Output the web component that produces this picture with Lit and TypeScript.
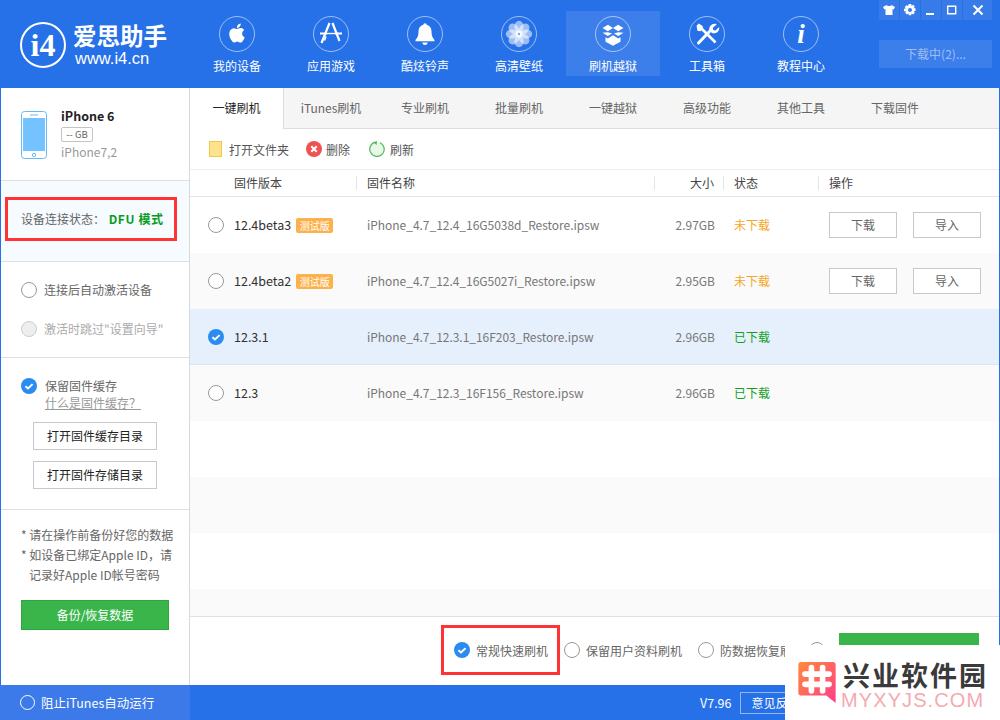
import { LitElement, html, css, svg } from "lit";
import { customElement } from "lit/decorators.js";

const ring = svg`<circle cx="18" cy="18" r="17.5" fill="none" stroke="#fff" stroke-opacity=".55" stroke-width="1"/>`;
const petals = [0, 45, 90, 135, 180, 225, 270, 315];
const navIcons = [
  svg`<g transform="translate(6.6 5.6) scale(.95)"><path fill="#fff" d="M18.71,19.5C17.88,20.74 17,21.95 15.66,21.97C14.32,22 13.89,21.18 12.37,21.18C10.84,21.18 10.37,21.95 9.1,22C7.79,22.05 6.8,20.68 5.96,19.47C4.25,17 2.94,12.45 4.7,9.39C5.57,7.87 7.13,6.91 8.82,6.88C10.1,6.86 11.32,7.75 12.11,7.75C12.89,7.75 14.37,6.68 15.92,6.84C16.57,6.87 18.39,7.1 19.56,8.82C19.47,8.88 17.39,10.1 17.41,12.63C17.44,15.65 20.06,16.66 20.09,16.67C20.06,16.74 19.67,18.11 18.71,19.5M13,3.5C13.73,2.67 14.94,2.04 15.94,2C16.07,3.17 15.6,4.35 14.9,5.19C14.21,6.04 13.07,6.7 11.95,6.61C11.8,5.46 12.36,4.26 13,3.5Z"/></g>`,
  svg`<g stroke="#fff" fill="none"><path stroke-width="2" d="M7 17.5h7M22 17.5h7"/><path stroke-width="1.4" d="M13.5 17.5h9"/><path stroke-width="2.2" d="M19.5 7l7 18M16.5 7 L8.5 27"/><path stroke-width="1.6" d="M13 20.5l-1.5 4"/></g>`,
  svg`<path fill="#fff" d="M18 7.2a1.7 1.7 0 0 1 1.7 1.6c3.2.8 4.8 3.3 4.8 6.7 0 4.2 1 6.2 3 8.5v1.2h-19v-1.2c2-2.3 3-4.3 3-8.5 0-3.4 1.6-5.9 4.8-6.7A1.7 1.7 0 0 1 18 7.2zM15.4 26.5h5.2a2.6 2.4 0 0 1-5.2 0z"/>`,
  svg`<g fill="#fff">${petals.map(
    (a) => svg`<ellipse cx="18" cy="10.8" rx="4.6" ry="6" opacity=".55" transform="rotate(${a} 18 18)"/>`
  )}<circle cx="18" cy="18" r="3.4" opacity=".9"/><circle cx="18" cy="18" r="1.2" fill="#7fa8ee"/></g>`,
  svg`<g fill="#fff"><path d="M13 8.800l5 3.200-5.200 3.200-5.300-3.300zM23 8.800L18 12l5.200 3.200 5.300-3.300z"/><path d="M7.500 16.800l5.300 3.300 4.200-2.600-4.200-1.300zM28.500 16.800l-5.300 3.300-4.200-2.600 4.200-1.300z"/><path d="M10.500 21.200l2.300 1.300 5.200-3.200 5.200 3.200 2.300-1.300v4.600L18 29.800l-7.500-4z"/></g>`,
  svg`<g fill="#fff" stroke="#fff"><path stroke-width="3" stroke-linecap="round" d="M9.5 27l11-11.5"/><path stroke="none" d="M27.8 8.200l-3.900 3.600.3 2.300 2.200.4 3.700-3.600c.7 3-1.500 7-6.600 6.400l-3.200-2.600c-.9-4.600 3.400-8.200 7.500-6.500z"/><path stroke-width="2.6" stroke-linecap="butt" d="M11 11l15.500 15.500"/><path stroke="none" d="M7.600 9.800l2.200-2.200 3.800 2.500.4 3-2.600 2.200-3-.5z"/></g>`,
  svg`<text x="18" y="27" text-anchor="middle" font-family="Liberation Serif, serif" font-weight="700" font-style="italic" font-size="27" fill="#fff">i</text>`,
];
const nav = ["我的设备", "应用游戏", "酷炫铃声", "高清壁纸", "刷机越狱", "工具箱", "教程中心"];
const tabs = ["一键刷机", "iTunes刷机", "专业刷机", "批量刷机", "一键越狱", "高级功能", "其他工具", "下载固件"];
type Row = { v: string; beta?: boolean; f: string; s: string; done: boolean; sel?: boolean };
const rows: Row[] = [
  { v: "12.4beta3", beta: true, f: "iPhone_4.7_12.4_16G5038d_Restore.ipsw", s: "2.97GB", done: false },
  { v: "12.4beta2", beta: true, f: "iPhone_4.7_12.4_16G5027i_Restore.ipsw", s: "2.95GB", done: false },
  { v: "12.3.1", f: "iPhone_4.7_12.3.1_16F203_Restore.ipsw", s: "2.96GB", done: true, sel: true },
  { v: "12.3", f: "iPhone_4.7_12.3_16F156_Restore.ipsw", s: "2.96GB", done: true },
];
const check = html`<svg class="ic16" viewBox="0 0 16 16"><circle cx="8" cy="8" r="8" fill="#2a8cf0"/><path d="M4.400 8.200l2.600 2.300 4.600-4.400" fill="none" stroke="#fff" stroke-width="2"/></svg>`;

@customElement("app-root")
export class AppRoot extends LitElement {
  static styles = css`
    :host { display: flex; flex-direction: column; width: 1000px; height: 720px; position: relative; overflow: hidden; background: #fff;
      font-family: "Noto Sans CJK SC", "Microsoft YaHei", sans-serif; font-size: 12px; color: #333; }
    .head { height: 88px; flex: none; background: #2670e8; display: flex; color: #fff; }
    .brand { width: 190px; flex: none; display: flex; align-items: center; padding: 1px 0 0 20px; box-sizing: border-box; gap: 8px; }
    .brand svg { width: 46px; height: 46px; display: block; }
    .brand b { display: block; font-size: 23.5px; line-height: 27px; font-weight: 700; margin-left: -1px; }
    .brand span { display: block; font-family: "Liberation Sans", sans-serif; font-size: 16.5px; line-height: 18px; margin: 0 0 0 1px; white-space: nowrap; }
    .nav { display: flex; width: 658px; padding-top: 11px; box-sizing: border-box; }
    .nav-item { width: 94px; height: 65px; display: flex; flex-direction: column; align-items: center; padding-top: 5px; box-sizing: border-box; }
    .nav-item.on { background: rgba(255,255,255,.1); }
    .nav-item svg { width: 36px; height: 36px; display: block; }
    .nav-item span { line-height: 16px; margin-top: 6px; }
    .tools { margin-left: 31px; width: 113px; }
    .win { display: flex; gap: 1px; height: 20px; }
    .win div { width: 20px; background: rgba(255,255,255,.08); display: flex; align-items: center; justify-content: center; }
    .win div:last-child { width: 29px; }
    .win svg { width: 12px; height: 12px; display: block; }
    .dl { margin-top: 20px; height: 28px; background: rgba(255,255,255,.1); color: rgba(255,255,255,.5); line-height: 28px; text-align: center; }
    .body { flex: 1; display: flex; min-height: 0; border-left: 1px solid #2670e8; border-right: 1px solid #2670e8; }
    .side { width: 189px; box-sizing: border-box; flex: none; border-right: 1px solid #d9d9d9; display: flex; flex-direction: column; }
    .sec { border-bottom: 1px solid #dfdfdf; box-sizing: border-box; flex: none; }
    .dev { height: 93px; display: flex; padding: 23px 0 0 20px; gap: 14px; }
    .phone { width: 26px; height: 48px; display: block; }
    .dev b { display: block; font-size: 12.5px; line-height: 14px; margin-top: -2px; color: #222; }
    .tag { display: block; width: 32px; height: 15px; box-sizing: border-box; border: 1px solid #c4c4c4; border-radius: 2px; font-size: 9.5px; line-height: 13px; text-align: center; margin-top: 4px; color: #666; }
    .model { display: block; color: #999; line-height: 16px; margin-top: 2px; }
    .stat { height: 81px; background: #f5fbff; padding: 16px 0 0 4px; }
    .redbox { border: 3px solid #f33; box-sizing: border-box; }
    .stat .redbox { width: 172px; height: 44px; padding-left: 13px; line-height: 38px; display: flex; align-items: center; color: #666; white-space: nowrap; }
    .stat b { color: #0a9a1f; margin-left: 1px; font-weight: 700; letter-spacing: .6px; }
    .act { height: 96px; padding: 19px 0 0 20px; display: flex; flex-direction: column; gap: 21px; }
    .opt { display: flex; align-items: center; gap: 7px; height: 18px; color: #666; white-space: nowrap; }
    .opt span { padding-bottom: 2px; }
    .opt.off { color: #aaa; }
    .radio { width: 16px; height: 16px; flex: none; border: 1.5px solid #999; border-radius: 50%; box-sizing: border-box; background: #fff; }
    .radio.dis { background: #eee; border-color: #ccc; }
    .ic16 { width: 16px; height: 16px; flex: none; display: block; }
    .cache { height: 152px; padding: 19px 0 0 20px; }
    .cache .opt { gap: 8px; }
    .link { display: block; color: #999; text-decoration: underline; margin: 0 0 0 24px; line-height: 16px; }
    .sbtn { width: 124px; height: 28px; border: 1px solid #c8c8c8; box-sizing: border-box; margin: 11px 0 0 12px; text-align: center; line-height: 26px; color: #222; background: #fff; }
    .notes { padding: 15px 0 0 20px; color: #666; line-height: 20px; }
    .notes p { margin: 0; white-space: nowrap; }
    .notes p.ind { padding-left: 8px; }
    .green { display: block; width: 148px; height: 30px; margin-top: 15px; background: #3ab54a; border: 1px solid #2ea63e; box-sizing: border-box; color: #fff; text-align: center; line-height: 28px; }
    .main { flex: 1; min-width: 0; display: flex; flex-direction: column; }
    .tabs { height: 41px; flex: none; display: flex; background: #f5f5f5; border-bottom: 1px solid #ddd; box-sizing: border-box; }
    .tab { width: 94px; box-sizing: border-box; text-align: center; line-height: 40px; color: #666; }
    .tab.on { background: #fff; color: #222; border-right: 1px solid #ddd; height: 41px; }
    .bar { height: 40px; flex: none; display: flex; align-items: center; padding-left: 19px; color: #555; }
    .bar span { margin-left: 7px; }
    .bar .i2 { margin-left: 17px; }
    .bar .i2 + span { margin-left: 4px; }
    .bar .i3 { margin-left: 19px; }
    .bar .i3 + span { margin-left: 5px; }
    .folder { width: 13px; height: 16px; background: #ffe28c; border: 1px solid #f0c84a; box-sizing: border-box; display: block; }
    .thead { height: 28px; flex: none; display: grid; grid-template-columns: 166px 298px 69px 95px 1fr; border-top: 1px solid #eee; border-bottom: 1px solid #e4e4e4; box-sizing: border-box; align-items: center; color: #444; }
    .thead div { height: 14px; line-height: 14px; padding-left: 10px; border-left: 1px solid #e4e4e4; }
    .thead div:first-child { border-left: 0; padding-left: 44px; }
    .thead .r { text-align: right; padding: 0 9px 0 0; }
    .list { flex: 1; min-height: 0; overflow: hidden; display: flex; flex-direction: column; }
    .row { height: 56px; flex: none; display: grid; grid-template-columns: 166px 298px 69px 95px 1fr; align-items: center; box-sizing: border-box; }
    .row:nth-child(even) { background: #fafafa; }
    .row.sel { background: #e6f0fc; box-shadow: inset 0 -1px #dbe5f0; }
    .ver { display: flex; align-items: center; padding-left: 18px; color: #333; font-size: 12.5px; white-space: nowrap; }
    .ver .radio, .ver .ic16 { margin-right: 10px; }
    .vt { padding-bottom: 2px; }
    .beta { width: 37px; height: 15px; background: #fbb14c; color: #fff; font-size: 10px; line-height: 15px; text-align: center; border-radius: 2px; margin-left: 5px; }
    .fname { padding: 0 0 2px 11px; color: #777; white-space: nowrap; letter-spacing: -.03px; }
    .size { text-align: right; padding: 0 8px 2px 0; color: #777; }
    .st { padding: 0 0 2px 11px; }
    .st.no { color: #f5a623; }
    .st.yes { color: #14a01f; }
    .ops { display: flex; gap: 16px; padding-left: 11px; }
    .ops div { width: 68px; height: 26px; border: 1px solid #c8c8c8; box-sizing: border-box; text-align: center; line-height: 24px; color: #666; background: #fff; }
    .foot-opts { height: 69px; flex: none; border-top: 1px solid #e0e0e0; box-sizing: border-box; display: flex; align-items: flex-start; padding: 8px 0 0 251px; color: #666; white-space: nowrap; }
    .foot-opts .redbox { width: 119px; height: 50px; flex: none; display: flex; align-items: center; padding-left: 10px; gap: 6px; }
    .fo { display: flex; align-items: center; height: 50px; margin-left: 4px; gap: 6px; flex: none; }
    .fo.third { margin-left: 16px; }
    .fo.fourth { margin-left: 5px; width: 22px; }
    .cta { width: 140px; height: 38px; flex: none; background: #3ab54a; margin: 8px 0 0 8px; }
    .foot { height: 35px; flex: none; display: flex; background: #2670e8; color: #fff; }
    .foot-l { width: 190px; background: #3b7ae8; display: flex; align-items: center; padding-left: 20px; gap: 6px; box-sizing: border-box; font-size: 12.5px; white-space: nowrap; }
    .foot-l i { width: 15px; height: 15px; border: 1.5px solid #fff; border-radius: 50%; box-sizing: border-box; display: block; }
    .foot-r { flex: 1; display: flex; align-items: center; padding-left: 510px; font-size: 12.5px; }
    .fb { width: 70px; height: 22px; line-height: 20px; border: 1px solid rgba(255,255,255,.5); box-sizing: border-box; text-align: center; margin-left: 9px; font-size: 12px; }
    .mark { position: absolute; left: 785px; top: 645px; width: 215px; height: 75px; background: #fff; }
    .mark svg { position: absolute; left: 13px; top: 17px; width: 38px; height: 41px; }
    .mark b { position: absolute; left: 58px; top: 16px; font-size: 27px; line-height: 28px; font-weight: 700; color: #3a3a3a; letter-spacing: 2px; white-space: nowrap; }
    .mark span { position: absolute; left: 56px; top: 45px; font-family: "Liberation Sans", sans-serif; font-size: 20px; line-height: 20px; color: #f5aab0; white-space: nowrap; letter-spacing: 1.1px; }
  `;

  render() {
    return html`
      <div class="head">
        <div class="brand">
          <svg viewBox="0 0 46 46"><circle cx="23" cy="23" r="22" fill="none" stroke="#fff" stroke-width="2"/><text x="23" y="34" text-anchor="middle" font-family="Liberation Serif, serif" font-weight="700" font-size="32" fill="#fff">i4</text></svg>
          <div><b>爱思助手</b><span>www.i4.cn</span></div>
        </div>
        <div class="nav">
          ${nav.map((n, i) => html`<div class="nav-item ${i === 4 ? "on" : ""}"><svg viewBox="0 0 36 36">${ring}${navIcons[i]}</svg><span>${n}</span></div>`)}
        </div>
        <div class="tools">
          <div class="win">
            <div><svg viewBox="0 0 12 12"><path fill="#fff" d="M3.500 1L0 3l1.300 2.500L2.500 5v6h7V5l1.200.5L12 3 8.500 1C8 2.400 4 2.400 3.500 1z"/></svg></div>
            <div><svg viewBox="0 0 12 12"><path fill="#fff" fill-rule="evenodd" d="M4.800 0h2.400l.4 1.700 1.500-.9 1.700 1.700-.9 1.500 1.700.4v2.400l-1.700.4.9 1.500-1.700 1.700-1.500-.9-.4 1.700H4.800l-.4-1.700-1.500.9-1.700-1.700.9-1.500L0 7.200V4.800l1.700-.4-.9-1.500 1.700-1.700 1.500.9zM6 4a2 2 0 1 0 0 4 2 2 0 0 0 0-4z"/></svg></div>
            <div><svg viewBox="0 0 12 12"><path fill="#fff" d="M1 9h8v2H1z"/></svg></div>
            <div><svg viewBox="0 0 12 12"><path fill="none" stroke="#fff" stroke-width="1.400" d="M1.700 2.200h8v7.600h-8z"/></svg></div>
            <div><svg viewBox="0 0 12 12"><path stroke="#fff" stroke-width="2" d="M1.500 1.500l9 9M10.500 1.500l-9 9"/></svg></div>
          </div>
          <div class="dl">下载中(2)...</div>
        </div>
      </div>
      <div class="body">
        <div class="side">
          <div class="sec dev">
            <svg class="phone" viewBox="0 0 26 48"><rect x=".5" y=".5" width="25" height="47" rx="3" fill="#fff" stroke="#6bb8f5"/><rect x="2" y="7" width="22" height="33" fill="#74c2ff"/><path d="M9 4h8" stroke="#6bb8f5"/><circle cx="13" cy="44" r="1.700" fill="none" stroke="#6bb8f5"/></svg>
            <div><b>iPhone 6</b><span class="tag">-- GB</span><span class="model">iPhone7,2</span></div>
          </div>
          <div class="sec stat"><div class="redbox">设备连接状态：&nbsp;<b>DFU 模式</b></div></div>
          <div class="sec act">
            <div class="opt"><i class="radio"></i><span>连接后自动激活设备</span></div>
            <div class="opt off"><i class="radio dis"></i><span>激活时跳过"设置向导"</span></div>
          </div>
          <div class="sec cache">
            <div class="opt">${check}<span>保留固件缓存</span></div>
            <a class="link">什么是固件缓存？</a>
            <div class="sbtn">打开固件缓存目录</div>
            <div class="sbtn">打开固件存储目录</div>
          </div>
          <div class="notes">
            <p>* 请在操作前备份好您的数据</p>
            <p>* 如设备已绑定Apple ID，请</p>
            <p class="ind">记录好Apple ID帐号密码</p>
            <div class="green">备份/恢复数据</div>
          </div>
        </div>
        <div class="main">
          <div class="tabs">${tabs.map((t, i) => html`<div class="tab ${i === 0 ? "on" : ""}">${t}</div>`)}</div>
          <div class="bar">
            <i class="folder"></i><span>打开文件夹</span>
            <svg class="ic16 i2" viewBox="0 0 16 16"><circle cx="8" cy="8" r="8" fill="#ef5350"/><path d="M5.300 5.300l5.400 5.400M10.700 5.300l-5.400 5.400" stroke="#fff" stroke-width="2"/></svg><span>删除</span>
            <svg class="ic16 i3" viewBox="0 0 16 16"><path d="M6.500 1.200A7.200 7.200 0 1 0 11 1.700" fill="#e8f8e8" stroke="#55b85c" stroke-width="1.200"/><path d="M4.500 1.500l3.500-1.500-.4 4z" fill="#55b85c"/></svg><span>刷新</span>
          </div>
          <div class="thead"><div>固件版本</div><div>固件名称</div><div class="r">大小</div><div>状态</div><div>操作</div></div>
          <div class="list">
            ${[0, 1, 2, 3, 4, 5, 6, 7].map((i) => {
              const r = rows[i];
              if (!r) return html`<div class="row"></div>`;
              return html`<div class="row ${r.sel ? "sel" : ""}">
                <div class="ver">${r.sel ? check : html`<i class="radio"></i>`}<span class="vt">${r.v}</span>${r.beta ? html`<span class="beta">测试版</span>` : ""}</div>
                <div class="fname">${r.f}</div>
                <div class="size">${r.s}</div>
                <div class="st ${r.done ? "yes" : "no"}">${r.done ? "已下载" : "未下载"}</div>
                ${r.done ? html`<div></div>` : html`<div class="ops"><div>下载</div><div>导入</div></div>`}
              </div>`;
            })}
          </div>
          <div class="foot-opts">
            <div class="redbox">${check}常规快速刷机</div>
            <div class="fo"><i class="radio"></i>保留用户资料刷机</div>
            <div class="fo third"><i class="radio"></i>防数据恢复刷机</div>
            <div class="fo fourth"><i class="radio"></i></div>
            <div class="cta"></div>
          </div>
        </div>
      </div>
      <div class="foot">
        <div class="foot-l"><i></i>阻止iTunes自动运行</div>
        <div class="foot-r">V7.96<div class="fb">意见反馈</div></div>
      </div>
      <div class="mark">
        <svg viewBox="0 0 40 44"><defs><linearGradient id="g" x1="0" y1="0" x2="1" y2="1"><stop offset="0" stop-color="#ff8a3c"/><stop offset="1" stop-color="#ff3d8b"/></linearGradient></defs><path fill="url(#g)" d="M3 0h34a3 3 0 0 1 3 3v41l-10-8H3a3 3 0 0 1-3-3V3a3 3 0 0 1 3-3z"/><path stroke="#fff" stroke-width="6" stroke-linecap="round" d="M14 6v25M26 6v25M7 13h26M7 24h26"/></svg>
        <b>兴业软件园</b><span>MYXYJS.COM</span>
      </div>
    `;
  }
}
